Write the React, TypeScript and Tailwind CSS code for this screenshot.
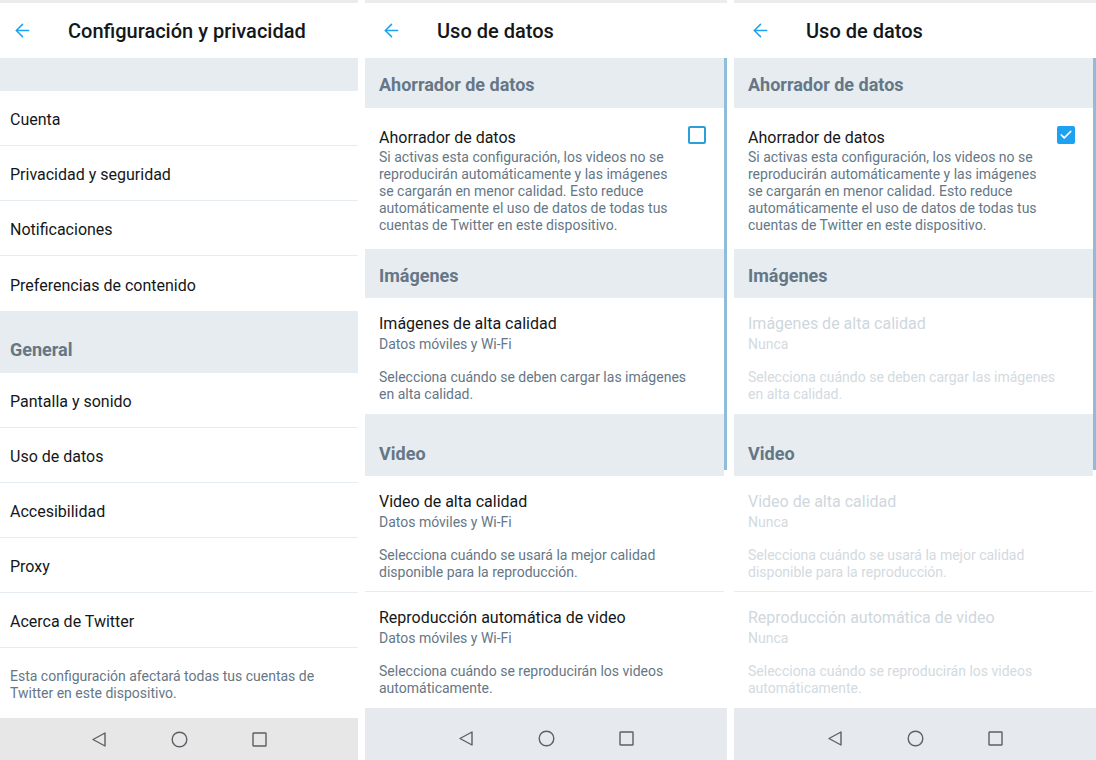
import { ArrowLeft, Check } from "lucide-react";

type Item = { title: string; value?: string; desc: string };

function TopBar({ title, inset }: { title: string; inset: string }) {
  return (
    <header className="flex h-[58px] shrink-0 flex-col bg-white">
      <div className="h-[3px] bg-[#ececec]" />
      <div className={`flex flex-1 items-center ${inset}`}>
        <span className="flex w-[56px] shrink-0 text-[#1da1f2]">
          <ArrowLeft size={21} strokeWidth={1.7} />
        </span>
        <h1 className="m-0 text-[20px] font-medium leading-7 text-[#14171a]">{title}</h1>
      </div>
    </header>
  );
}

function NavBar({ tint }: { tint: string }) {
  return (
    <nav className={`flex shrink-0 items-center justify-center gap-16 ${tint}`}>
      <svg width="16" height="17" viewBox="0 0 16 17" fill="none" stroke="#5c5f63" strokeWidth="1.4" strokeLinejoin="round">
        <path d="M14 2 L2 8.5 L14 15 Z" />
      </svg>
      <svg width="17" height="17" viewBox="0 0 17 17" fill="none" stroke="#5c5f63" strokeWidth="1.4">
        <circle cx="8.5" cy="8.5" r="7.3" />
      </svg>
      <svg width="15" height="15" viewBox="0 0 15 15" fill="none" stroke="#5c5f63" strokeWidth="1.4">
        <rect x="1" y="1" width="13" height="13" rx="0.5" />
      </svg>
    </nav>
  );
}

function Section({ label, className }: { label: string; className: string }) {
  return (
    <div className={`flex shrink-0 bg-[#e6ecf0] px-[14px] text-[18px] font-bold leading-6 text-[#657786] ${className}`}>
      {label}
    </div>
  );
}

function SettingsMenu() {
  const top = ["Cuenta", "Privacidad y seguridad", "Notificaciones", "Preferencias de contenido"];
  const general = ["Pantalla y sonido", "Uso de datos", "Accesibilidad", "Proxy", "Acerca de Twitter"];
  const row = (label: string, last: boolean) => (
    <div
      key={label}
      className={`flex h-[55px] shrink-0 items-center px-[10px] pt-1 text-[16px] leading-5 text-[#14171a] ${last ? "" : "border-b border-[#e6ecf0]"}`}
    >
      {label}
    </div>
  );
  return (
    <section className="flex h-[760px] w-[358px] shrink-0 flex-col bg-white">
      <TopBar title="Configuración y privacidad" inset="pl-[12px]" />
      <div className="h-[33px] shrink-0 bg-[#e6ecf0]" />
      {top.map((t, i) => row(t, i === top.length - 1))}
      <div className="flex h-[62px] shrink-0 items-end bg-[#e6ecf0] px-[10px] pb-[11px] text-[18px] font-bold leading-6 text-[#657786]">
        General
      </div>
      {general.map((t) => row(t, false))}
      <p className="m-0 flex-1 px-[10px] pt-5 text-[14px] leading-[17px] text-[#657786]">
        Esta configuración afectará todas tus cuentas de Twitter en este dispositivo.
      </p>
      <NavBar tint="h-[42px] bg-[#e7e7e7]" />
    </section>
  );
}

function DataUsage({ saver }: { saver: boolean }) {
  const value = saver ? "Nunca" : "Datos móviles y Wi-Fi";
  const items: Item[] = [
    {
      title: "Imágenes de alta calidad",
      value,
      desc: "Selecciona cuándo se deben cargar las imágenes en alta calidad.",
    },
    {
      title: "Video de alta calidad",
      value,
      desc: "Selecciona cuándo se usará la mejor calidad disponible para la reproducción.",
    },
    {
      title: "Reproducción automática de video",
      value,
      desc: "Selecciona cuándo se reproducirán los videos automáticamente.",
    },
  ];
  const titleColor = saver ? "text-[#cfd7dd]" : "text-[#14171a]";
  const subColor = saver ? "text-[#d3dae0]" : "text-[#657786]";

  const option = (it: Item, divider: boolean) => (
    <div key={it.title} className={`flex h-[116px] shrink-0 flex-col pl-[14px] pr-[28px] pt-[16px] ${divider ? "border-b border-[#e6ecf0]" : ""}`}>
      <span className={`text-[16px] leading-5 ${titleColor}`}>{it.title}</span>
      <span className={`pt-[2px] text-[14px] leading-[17px] ${subColor}`}>{it.value}</span>
      <span className={`pt-[16px] text-[14px] leading-[17px] ${subColor}`}>{it.desc}</span>
    </div>
  );

  return (
    <section className="relative flex h-[760px] w-[362px] shrink-0 flex-col bg-white">
      <TopBar title="Uso de datos" inset="pl-[16px]" />
      <div className="flex min-h-0 flex-1 flex-col overflow-hidden pr-[3px]">
        <Section label="Ahorrador de datos" className="h-[50px] items-center pt-1" />
        <div className="flex h-[141px] shrink-0 items-start gap-4 px-[14px] pt-[17px]">
          <div className="flex flex-1 flex-col">
            <span className="pt-[3px] text-[16px] leading-5 text-[#14171a]">Ahorrador de datos</span>
            <span className="pt-[1px] text-[14px] leading-[17px] text-[#657786]">
              Si activas esta configuración, los videos no se reproducirán automáticamente y las imágenes se cargarán en menor calidad. Esto reduce automáticamente el uso de datos de todas tus cuentas de Twitter en este dispositivo.
            </span>
          </div>
          {saver ? (
            <span className="mr-[4px] mt-[1px] flex size-[18px] shrink-0 items-center justify-center rounded-[2px] bg-[#1da1f2] text-white">
              <Check size={14} strokeWidth={3} />
            </span>
          ) : (
            <span className="mr-[4px] mt-[1px] size-[18px] shrink-0 rounded-[2px] border-2 border-[#2a9fd8]" />
          )}
        </div>
        <Section label="Imágenes" className="h-[49px] items-center pt-1" />
        {option(items[0], false)}
        <Section label="Video" className="h-[62px] items-end pb-[10px]" />
        {option(items[1], true)}
        {option(items[2], false)}
      </div>
      <span className="absolute right-0 top-[58px] h-[412px] w-[3px] bg-[#8fbcd9]" aria-hidden="true" />
      <div className="flex h-[52px] shrink-0 flex-col bg-[#e6eaee] pt-[9px]">
        <NavBar tint="h-[42px]" />
      </div>
    </section>
  );
}

export default function App() {
  return (
    <main className="flex h-[760px] w-[1096px] gap-[7px] overflow-hidden bg-white font-['Roboto','Liberation_Sans',sans-serif]">
      <SettingsMenu />
      <DataUsage saver={false} />
      <DataUsage saver />
    </main>
  );
}
